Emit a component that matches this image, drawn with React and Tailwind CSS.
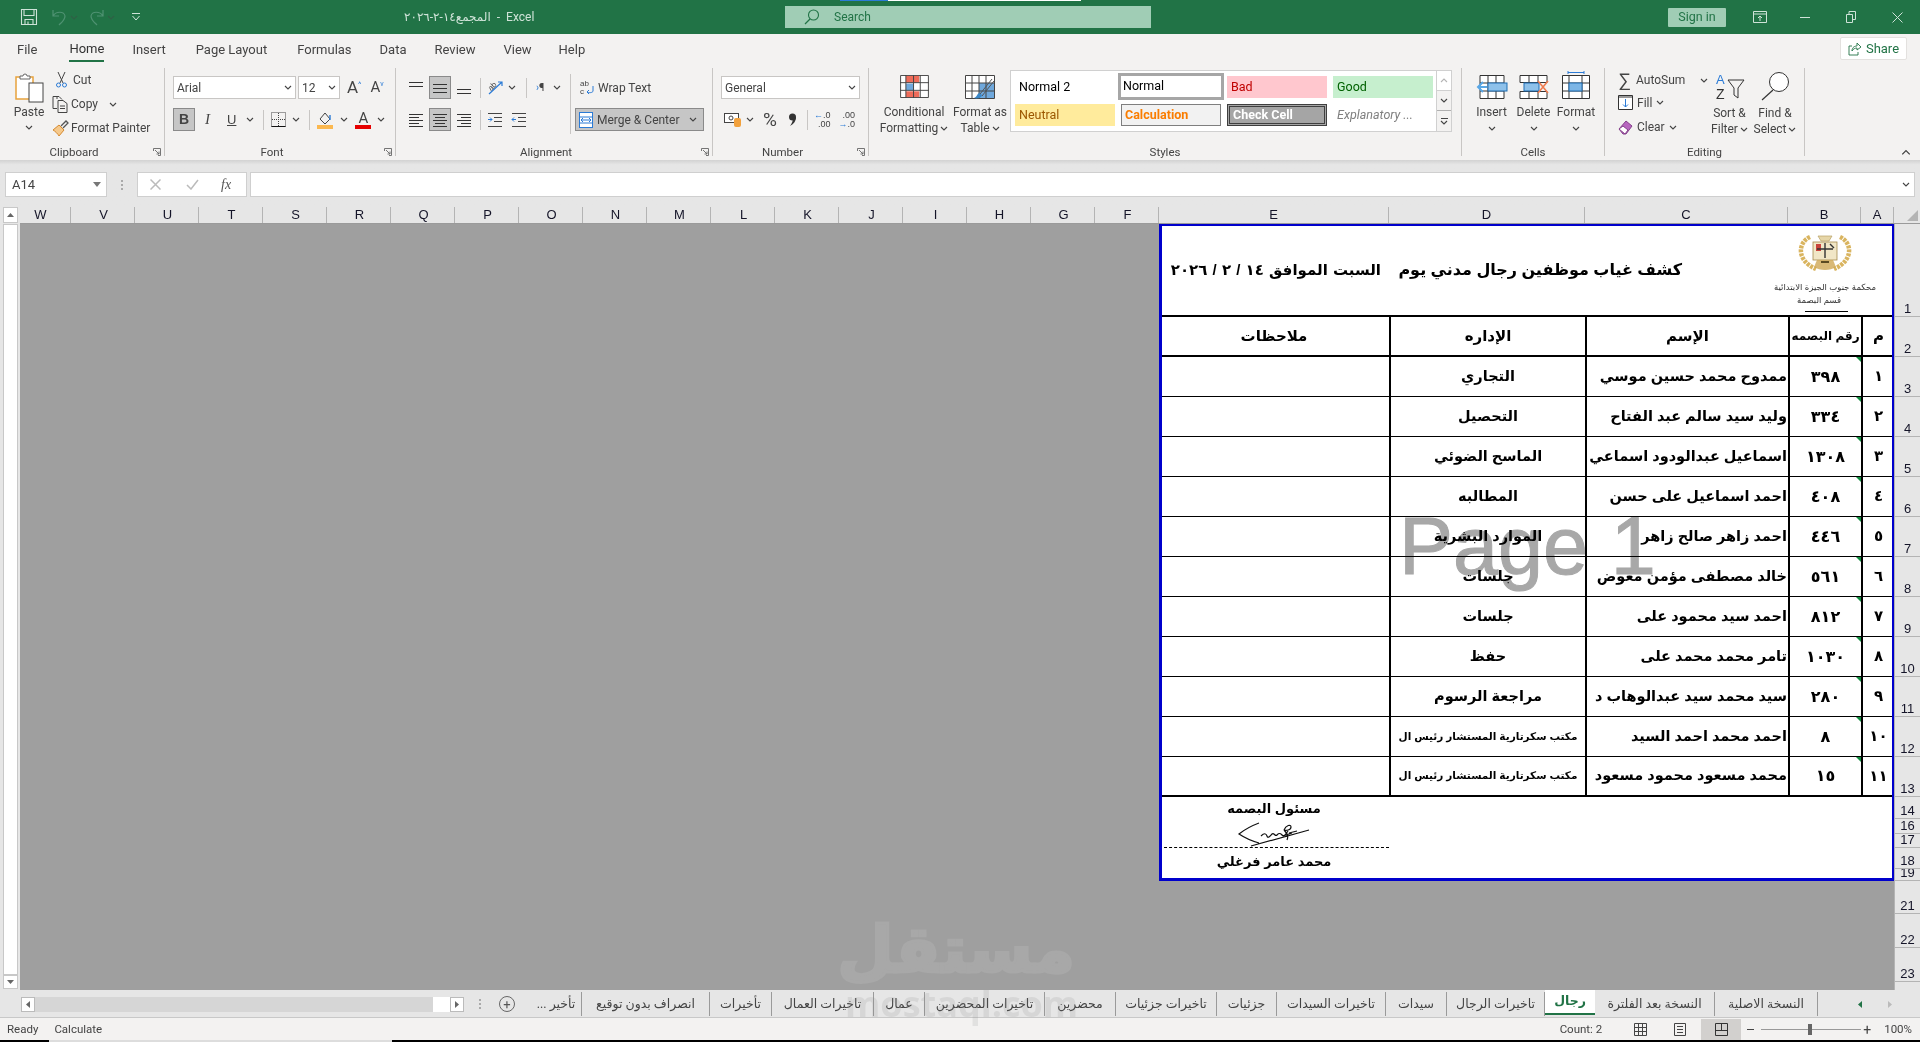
import React from 'react';

const Chev = ({ className = '', up = false }) => (
  <svg width="8" height="5" viewBox="0 0 8 5" className={`shrink-0 ${className}`}>
    <path d={up ? 'M1 4l3-3 3 3' : 'M1 1l3 3 3-3'} fill="none" stroke="#444" strokeWidth="1.1" />
  </svg>
);

const Lines = ({ rows, w = 16, h = 14, color = '#333', stroke = 1 }) => (
  <svg width={w} height={h} viewBox={`0 0 ${w} ${h}`} className="shrink-0">
    {rows.map((r, i) => (
      <line key={i} x1={r[0]} x2={r[1]} y1={r[2] + 0.5} y2={r[2] + 0.5} stroke={r[3] || color} strokeWidth={stroke} />
    ))}
  </svg>
);

const Launcher = () => (
  <svg width="8" height="8" viewBox="0 0 8 8" className="absolute right-[3px] top-[4px]">
    <path d="M.5 3V.5H7.5V7.5H5M2 2l4 4M6 3.5V6H3.5" fill="none" stroke="#666" strokeWidth="0.9" />
  </svg>
);

const Group = ({ w, label, launcher, children }) => (
  <div className={`${w} h-[88px] shrink-0 border-r border-[#c8c6c4] flex flex-col`}>
    <div className="h-[76px] flex">{children}</div>
    <div className={`relative h-[12px] leading-[16px] text-center text-[11.5px] text-[#444] ${launcher ? 'pr-[16px]' : ''}`}>
      {label}
      {launcher && <Launcher />}
    </div>
  </div>
);

const Btn = ({ active, className = '', children }) => (
  <div className={`h-[23px] flex items-center justify-center shrink-0 ${active ? 'bg-[#c6c6c6] border border-[#8a8a8a]' : ''} ${className}`}>
    {children}
  </div>
);

const VSep = ({ className = '' }) => <div className={`w-px h-[20px] bg-[#c8c6c4] shrink-0 ${className}`} />;

const GridIcon = ({ children, w = 30, h = 24 }) => (
  <svg width={w} height={h} viewBox="0 0 30 24" className="shrink-0">
    {children}
  </svg>
);

const cols = ['W', 'V', 'U', 'T', 'S', 'R', 'Q', 'P', 'O', 'N', 'M', 'L', 'K', 'J', 'I', 'H', 'G', 'F'];
const rowHeads = [
  ['1', 'h-[93px]'], ['2', 'h-[40px]'], ['3', 'h-[40px]'], ['4', 'h-[40px]'], ['5', 'h-[40px]'], ['6', 'h-[40px]'],
  ['7', 'h-[40px]'], ['8', 'h-[40px]'], ['9', 'h-[40px]'], ['10', 'h-[40px]'], ['11', 'h-[40px]'], ['12', 'h-[40px]'],
  ['13', 'h-[40px]'], ['14', 'h-[22px]'], ['16', 'h-[15px]'], ['17', 'h-[14px]'], ['18', 'h-[21px]'], ['19', 'h-[12px]'],
  ['21', 'h-[33px]'], ['22', 'h-[34px]'], ['23', 'h-[34px]'], ['', 'h-[9px]'],
];

const LONG = 'مكتب سكرتارية المستشار رئيس ال';
const people = [
  ['١', '٣٩٨', 'ممدوح محمد حسين موسي', 'التجاري'],
  ['٢', '٣٣٤', 'وليد سيد سالم عبد الفتاح', 'التحصيل'],
  ['٣', '١٣٠٨', 'اسماعيل عبدالودود اسماعي', 'الماسح الضوئي'],
  ['٤', '٤٠٨', 'احمد اسماعيل على حسن', 'المطالبه'],
  ['٥', '٤٤٦', 'احمد زاهر صالح زاهر', 'الموارد البشرية'],
  ['٦', '٥٦١', 'خالد مصطفى مؤمن معوض', 'جلسات'],
  ['٧', '٨١٢', 'احمد سيد محمود على', 'جلسات'],
  ['٨', '١٠٣٠', 'تامر محمد محمد على', 'حفظ'],
  ['٩', '٢٨٠', 'سيد محمد سيد عبدالوهاب د', 'مراجعة الرسوم'],
  ['١٠', '٨', 'احمد محمد احمد السيد', LONG],
  ['١١', '١٥', 'محمد مسعود محمود مسعود', LONG],
];

const tabs = [
  ['تأخير ...', 'w-[51px]'], ['انصراف بدون توقيع', 'w-[128px]'], ['تأخيرات', 'w-[62px]'], ['تاخيرات العمال', 'w-[102px]'],
  ['عمال', 'w-[51px]'], ['تاخيرات المحضرين', 'w-[120px]'], ['محضرين', 'w-[71px]'], ['تاخيرات جزئيات', 'w-[101px]'],
  ['جزئيات', 'w-[60px]'], ['تاخيرات السيدات', 'w-[109px]'], ['سيدات', 'w-[61px]'], ['تاخيرات الرجال', 'w-[98px]'],
];

const Logo = () => (
  <svg width="58" height="42" viewBox="0 0 58 42">
    <path d="M14 6C1 12 1 30 20 38M44 6C57 12 57 30 38 38" fill="none" stroke="#d9b45f" strokeWidth="4.5" strokeDasharray="3 1" />
    <path d="M22 5h14l-3 5h-8z" fill="#e6d6a8" stroke="#b8a065" strokeWidth="0.7" />
    <rect x="17" y="11" width="24" height="18" fill="#f1e6c6" stroke="#a5894c" strokeWidth="0.8" />
    <rect x="20" y="13" width="5" height="7" fill="#c8433c" />
    <path d="M29 12v15M21 18h16M34 13l4 4" stroke="#333" strokeWidth="1.4" fill="none" />
    <path d="M18 36c6 4 16 4 22 0l-3-7H21z" fill="#cfa855" opacity="0.8" />
    <path d="M25 31h8" stroke="#5b4a22" strokeWidth="2" />
  </svg>
);

const Signature = () => (
  <svg width="74" height="28" viewBox="0 0 74 28">
    <path
      d="M22 4C14 7 7 11 2 15c6 4 13 7 20 9M24 17c3-3 5-3 6 0s3 0 5-2 3 3 5 1 3-2 5 0 4-1 6-4M47 11c2-5 7-6 7-3s-5 4-7 3c3 3 5 6 3 10M55 14l-9 3M14 27l58-16M60 12l-8 2"
      fill="none" stroke="#111" strokeWidth="1.2"
    />
  </svg>
);

const App = () => (
  <div className="w-[1920px] h-[1042px] overflow-hidden flex flex-col font-['Roboto','DejaVu_Sans',sans-serif] text-[12px] text-[#444] bg-[#e6e6e6] relative">
    {/* title bar */}
    <div className="h-[34px] bg-[#217346] flex items-center shrink-0 relative text-[#cfe3d8]">
      <div className="absolute left-[840px] top-0 w-[241px] h-px bg-white">
        <div className="w-[48px] h-px bg-[#2b7bd6]" />
      </div>
      <svg width="18" height="18" viewBox="0 0 18 18" className="ml-[20px] shrink-0">
        <path d="M1.5 1.5h15v15h-15zM4 1.5v6h10v-6M5 16.5v-5h8v5M8 16.5v-3" fill="none" stroke="#cfe3d8" strokeWidth="1.1" />
      </svg>
      <svg width="16" height="18" viewBox="0 0 16 18" className="ml-[13px] shrink-0">
        <path d="M2 2v6h6M2 8c3-5 11-5 12 0 0 4-3 6-6 9" fill="none" stroke="#4f9272" strokeWidth="1.2" />
      </svg>
      <Chev className="ml-[3px] opacity-40" />
      <svg width="16" height="18" viewBox="0 0 16 18" className="ml-[11px] shrink-0">
        <path d="M14 2v6H8M14 8C11 3 3 3 2 8c0 4 3 6 6 9" fill="none" stroke="#4f9272" strokeWidth="1.2" />
      </svg>
      <Chev className="ml-[2px] opacity-40" />
      <svg width="8" height="8" viewBox="0 0 8 8" className="ml-[17px] shrink-0">
        <path d="M0 .5h8M.5 3l3.5 4 3.5-4" fill="none" stroke="#cfe3d8" strokeWidth="1" />
      </svg>
      <div className="w-[230px] ml-[264px] shrink-0 flex gap-[6px] text-[12px] whitespace-nowrap">
        <span>المجمع١٤-٢-٢٠٢٦</span><span>-</span><span>Excel</span>
      </div>
      <div className="absolute left-[785px] top-[6px] w-[366px] h-[22px] bg-[#a0cdb5] flex items-center text-[#217346]">
        <svg width="16" height="16" viewBox="0 0 16 16" className="ml-[19px]">
          <circle cx="9.5" cy="6" r="5" fill="none" stroke="#217346" strokeWidth="1.1" />
          <path d="M6 10l-5 5" stroke="#217346" strokeWidth="1.2" />
        </svg>
        <span className="ml-[14px]">Search</span>
      </div>
      <div className="ml-auto w-[58px] h-[19px] bg-[#a0cdb5] text-[#217346] rounded-[1px] flex items-center justify-center text-[12.5px]">Sign in</div>
      <svg width="14" height="12" viewBox="0 0 14 12" className="ml-[27px]">
        <path d="M.5.5h13v11H.5zM.5 3h13M7 10V5M5 7l2-2 2 2" fill="none" stroke="#cfe3d8" />
      </svg>
      <div className="w-[10px] h-px bg-[#cfe3d8] ml-[33px]" />
      <svg width="10" height="12" viewBox="0 0 10 12" className="ml-[36px]">
        <path d="M.5 3.5h6v8h-6zM3 3.5V.5h6.5v8H6.5" fill="none" stroke="#cfe3d8" />
      </svg>
      <svg width="11" height="11" viewBox="0 0 11 11" className="ml-[36px] mr-[17px]">
        <path d="M.5.5l10 10M10.5.5l-10 10" stroke="#cfe3d8" />
      </svg>
    </div>

    {/* ribbon */}
    <div className="h-[126px] bg-[#f3f2f1] shrink-0 flex flex-col">
      <div className="h-[34px] flex items-start text-[13px] relative">
        {[
          ['File', 'ml-[17px]', false], ['Home', 'ml-[32px]', true], ['Insert', 'ml-[28px]', false], ['Page Layout', 'ml-[30px]', false],
          ['Formulas', 'ml-[30px]', false], ['Data', 'ml-[28px]', false], ['Review', 'ml-[28px]', false], ['View', 'ml-[28px]', false], ['Help', 'ml-[27px]', false],
        ].map(([t, m, on]) => (
          <div key={t} className={`${m} h-[28px] flex items-center pt-[4px] ${on ? 'border-b-[2px] border-[#217346] text-[#333]' : ''}`}>{t}</div>
        ))}
        <div className="ml-auto mr-[13px] mt-[3px] w-[67px] h-[23px] bg-white border border-[#e3e1df] rounded-[2px] flex items-center justify-center gap-[5px] text-[#217346] text-[13px]">
          <svg width="13" height="14" viewBox="0 0 13 14">
            <path d="M4 4H1v9h9v-3M4 9c0-4 3-5 5-5V1l4 4-4 3V6c-2 0-4 1-5 3z" fill="none" stroke="#217346" strokeWidth="0.9" />
          </svg>
          Share
        </div>
      </div>

      <div className="h-[88px] flex">
        <Group w="w-[165px]" label="Clipboard" launcher>
          <div className="w-[40px] ml-[9px] flex flex-col items-center pt-[5px]">
            <svg width="29" height="30" viewBox="0 0 29 30">
              <path d="M1 4h17v22H1z" fill="#fff" stroke="#e8a33d" strokeWidth="1.5" />
              <path d="M5 5V3h3a2 2 0 014 0h3v3H5z" fill="#fff" stroke="#666" />
              <rect x="14" y="10" width="14" height="19" fill="#fff" stroke="#444" />
            </svg>
            <span className="mt-[2px] leading-[14px]">Paste</span>
            <Chev className="mt-[6px]" />
          </div>
          <div className="ml-[3px] flex flex-col">
            <div className="h-[24px] flex items-center gap-[5px] pl-[3px]">
              <svg width="13" height="16" viewBox="0 0 13 16">
                <path d="M3 0l5 11M10 0L5 11" stroke="#444" fill="none" />
                <circle cx="3.5" cy="13" r="2" fill="none" stroke="#2b7bd6" />
                <circle cx="9.5" cy="13" r="2" fill="none" stroke="#2b7bd6" />
              </svg>
              Cut
            </div>
            <div className="h-[24px] flex items-center gap-[2px]">
              <svg width="17" height="17" viewBox="0 0 17 17">
                <path d="M5 3V.5h0M1 .5h6l3 3M1 .5v12h4M6 4.5h5l4 3v9H6zM8 10h5M8 12.5h5" fill="none" stroke="#444" />
              </svg>
              Copy
              <Chev className="ml-[9px]" />
            </div>
            <div className="h-[24px] flex items-center gap-[2px]">
              <svg width="17" height="17" viewBox="0 0 17 17">
                <path d="M1 10l6-5 5 5-5 6c-1-2-4-5-6-6z" fill="#f5c98c" stroke="#d68a2f" />
                <path d="M9 6l5-5 2 2-5 5" fill="none" stroke="#555" strokeWidth="1.3" />
              </svg>
              Format Painter
            </div>
          </div>
        </Group>

        <Group w="w-[231px]" label="Font" launcher>
          <div className="pl-[8px] pt-[8px] flex flex-col">
            <div className="flex items-center h-[23px]">
              <div className="w-[123px] h-[23px] bg-white border border-[#c8c6c4] flex items-center justify-between px-[3px]">Arial<Chev /></div>
              <div className="w-[42px] h-[23px] ml-[2px] bg-white border border-[#c8c6c4] flex items-center justify-between px-[3px]">12<Chev /></div>
              <span className="ml-[7px] text-[17px] leading-none">A</span><span className="text-[8px] self-start mt-[3px] text-[#2b7bd6]">^</span>
              <span className="ml-[9px] text-[15px] leading-none">A</span><span className="text-[7px] self-start mt-[3px] text-[#2b7bd6]">v</span>
            </div>
            <div className="flex items-center h-[23px] mt-[9px]">
              <Btn active className="w-[22px] font-['Liberation_Sans',sans-serif] font-bold text-[14px]">B</Btn>
              <span className="ml-[10px] w-[10px] italic font-['Liberation_Serif',serif] text-[15px]">I</span>
              <span className="ml-[12px] underline font-['Liberation_Sans',sans-serif] text-[13px]">U</span>
              <Chev className="ml-[10px]" />
              <VSep className="ml-[9px]" />
              <svg width="15" height="15" viewBox="0 0 15 15" className="ml-[7px]">
                <path d="M.5.5h14v14H.5z" fill="none" stroke="#444" strokeDasharray="1 1" />
                <path d="M.5 14.5h14" stroke="#111" />
                <path d="M7.5 1v13M1 7.5h13" stroke="#444" strokeDasharray="1 1" />
              </svg>
              <Chev className="ml-[6px]" />
              <VSep className="ml-[9px]" />
              <svg width="17" height="18" viewBox="0 0 17 18" className="ml-[7px]">
                <path d="M3 8l5-6 5 6-5 5z" fill="none" stroke="#444" />
                <path d="M13 4v5" stroke="#2b7bd6" strokeWidth="1.4" />
                <rect x="0" y="14" width="16" height="4" fill="#fbb84f" />
              </svg>
              <Chev className="ml-[6px]" />
              <div className="ml-[7px] w-[16px] flex flex-col items-center">
                <span className="text-[15px] leading-[14px]">A</span>
                <div className="w-[16px] h-[4px] bg-[#e60000]" />
              </div>
              <Chev className="ml-[6px]" />
            </div>
          </div>
        </Group>

        <Group w="w-[317px]" label="Alignment" launcher>
          <div className="pl-[9px] pt-[8px] flex flex-col w-[174px]">
            <div className="flex items-center h-[23px]">
              <Btn className="w-[22px]"><Lines rows={[[1, 15, 1], [1, 15, 5]]} /></Btn>
              <Btn active className="w-[22px] ml-[2px]"><Lines rows={[[1, 15, 3], [1, 15, 7], [1, 15, 11]]} /></Btn>
              <Btn className="w-[22px] ml-[2px]"><Lines rows={[[1, 15, 8], [1, 15, 12]]} /></Btn>
              <VSep className="ml-[5px]" />
              <svg width="17" height="17" viewBox="0 0 17 17" className="ml-[6px]">
                <text x="0" y="9" fontSize="8" transform="rotate(-45 6 6)" fill="#444" fontFamily="Liberation Sans">ab</text>
                <path d="M2 15L15 3M11 3h4v4" fill="none" stroke="#2b7bd6" strokeWidth="1.2" />
              </svg>
              <Chev className="ml-[4px]" />
              <VSep className="ml-[10px]" />
              <span className="ml-[9px] text-[#2b7bd6] text-[10px] leading-none">›</span>
              <span className="text-[11px] leading-none">¶</span>
              <Chev className="ml-[9px]" />
            </div>
            <div className="flex items-center h-[23px] mt-[9px]">
              <Btn className="w-[22px]"><Lines rows={[[1, 15, 1], [1, 11, 4], [1, 15, 7], [1, 11, 10], [1, 15, 13]]} /></Btn>
              <Btn active className="w-[22px] ml-[2px]"><Lines rows={[[1, 15, 1], [3, 13, 4], [1, 15, 7], [3, 13, 10], [1, 15, 13]]} /></Btn>
              <Btn className="w-[22px] ml-[2px]"><Lines rows={[[1, 15, 1], [5, 15, 4], [1, 15, 7], [5, 15, 10], [1, 15, 13]]} /></Btn>
              <VSep className="ml-[5px]" />
              <svg width="16" height="14" viewBox="0 0 16 14" className="ml-[6px]">
                <path d="M1 .5h14M7 4.5h8M7 8.5h8M1 13.5h14" stroke="#444" />
                <path d="M1 6.5h4M3 4.5l2 2-2 2" stroke="#2b7bd6" fill="none" />
              </svg>
              <svg width="16" height="14" viewBox="0 0 16 14" className="ml-[8px]">
                <path d="M1 .5h14M7 4.5h8M7 8.5h8M1 13.5h14" stroke="#444" />
                <path d="M1 6.5h4M3 4.5l-2 2 2 2" stroke="#2b7bd6" fill="none" />
              </svg>
            </div>
          </div>
          <div className="w-px h-[60px] bg-[#c8c6c4] mt-[6px]" />
          <div className="ml-[4px] pt-[8px] flex flex-col">
            <div className="h-[23px] flex items-center gap-[3px] ml-[5px]">
              <svg width="15" height="17" viewBox="0 0 15 17">
                <text x="0" y="7" fontSize="8" fill="#444" fontFamily="Liberation Sans">ab</text>
                <text x="0" y="15" fontSize="8" fill="#444" fontFamily="Liberation Sans">c</text>
                <path d="M13 7v5c0 2-5 2-6 1M9 11l-2 2 2 2" fill="none" stroke="#2b7bd6" />
              </svg>
              Wrap Text
            </div>
            <div className="mt-[9px] w-[129px] h-[23px] bg-[#c6c6c6] border border-[#8a8a8a] flex items-center px-[3px] gap-[4px]">
              <svg width="14" height="16" viewBox="0 0 14 16">
                <rect x="0.5" y="0.5" width="13" height="15" fill="#fff" stroke="#2b7bd6" />
                <path d="M.5 5h13M.5 11h13" stroke="#2b7bd6" />
                <path d="M2 8h10M4 6l-2 2 2 2M10 6l2 2-2 2" fill="none" stroke="#2b7bd6" />
              </svg>
              Merge &amp; Center
              <Chev className="ml-auto mr-[3px]" />
            </div>
          </div>
        </Group>

        <Group w="w-[156px]" label="Number" launcher>
          <div className="pl-[8px] pt-[8px] flex flex-col">
            <div className="w-[139px] h-[23px] bg-white border border-[#c8c6c4] flex items-center justify-between px-[3px]">General<Chev /></div>
            <div className="flex items-center h-[23px] mt-[9px]">
              <svg width="17" height="15" viewBox="0 0 17 15" className="ml-[3px]">
                <rect x="0.5" y="1.5" width="14" height="9" fill="#fff" stroke="#444" />
                <circle cx="7" cy="6" r="2" fill="none" stroke="#444" />
                <rect x="10" y="6" width="7" height="9" rx="2" fill="#f2a13c" />
              </svg>
              <Chev className="ml-[5px]" />
              <span className="ml-[9px] text-[19px] leading-none">%</span>
              <svg width="9" height="14" viewBox="0 0 9 14" className="ml-[11px] shrink-0">
                <circle cx="4.500" cy="4" r="3.500" fill="#333" />
                <path d="M8 4c0 4-2 7-6 9 2-3 3-5 3-8z" fill="#333" />
              </svg>
              <VSep className="ml-[10px]" />
              <div className="ml-[6px] flex flex-col text-[9px] leading-[9px] font-['Liberation_Sans',sans-serif] text-right">
                <span><span className="text-[#2b7bd6]">←</span>.0</span><span>.00</span>
              </div>
              <div className="ml-[8px] flex flex-col text-[9px] leading-[9px] font-['Liberation_Sans',sans-serif] text-right">
                <span>.00</span><span><span className="text-[#2b7bd6]">→</span>.0</span>
              </div>
            </div>
          </div>
        </Group>

        <Group w="w-[593px]" label="Styles">
          <div className="w-[80px] ml-[5px] flex flex-col items-center pt-[7px]">
            <GridIcon w={29} h={23}>
              <path d="M.5.5h29v23H.5z" fill="#fff" stroke="#444" />
              <rect x="6" y="1" width="14" height="7" fill="#ef6c5a" />
              <rect x="6" y="9" width="8" height="7" fill="#6fa8dc" />
              <rect x="6" y="17" width="14" height="6" fill="#ef6c5a" />
              <path d="M6 0v24M14 0v24M21 0v24M0 8h30M0 16h30" stroke="#444" />
            </GridIcon>
            <span className="mt-[6px] leading-[16px]">Conditional</span>
            <span className="leading-[16px] flex items-center gap-[2px]">Formatting<Chev /></span>
          </div>
          <div className="w-[52px] flex flex-col items-center pt-[7px] whitespace-nowrap">
            <GridIcon w={30} h={24}>
              <path d="M.5.5h29v23H.5z" fill="#fff" stroke="#444" />
              <rect x="14" y="8" width="15" height="15" fill="#6fa8dc" />
              <path d="M7 0v24M14 0v24M21 0v24M0 8h30M0 16h30" stroke="#444" />
              <path d="M27 4L15 19M29 6L17 21" stroke="#555" fill="#fff" />
              <path d="M14 18c-2 1-2 4-5 5 3 1 8 0 8-3z" fill="#3a87c8" />
            </GridIcon>
            <span className="mt-[5px] leading-[16px]">Format as</span>
            <span className="leading-[16px] flex items-center gap-[2px]">Table<Chev /></span>
          </div>
          <div className="ml-[4px] mt-[2px] w-[442px] h-[62px] bg-white border border-[#d0d0d0] flex">
            <div className="pl-[4px] pt-[5px] grid grid-cols-[100px_100px_100px_100px] grid-rows-[22px_22px] gap-x-[6px] gap-y-[6px] text-[12.5px] w-[426px]">
              <div className="flex items-center pl-[4px] text-black">Normal 2</div>
              <div className="flex items-center pl-[2px] -ml-[3px] -mt-[3px] w-[106px] h-[27px] border-[3px] border-[#a6a6a6] bg-white text-black">Normal</div>
              <div className="flex items-center pl-[4px] bg-[#ffc7ce] text-[#c00000]">Bad</div>
              <div className="flex items-center pl-[4px] bg-[#c6efce] text-[#006100]">Good</div>
              <div className="flex items-center pl-[4px] bg-[#ffeb9c] text-[#9c5700]">Neutral</div>
              <div className="flex items-center pl-[3px] bg-[#f2f2f2] border border-[#7f7f7f] text-[#fa7d00] font-bold">Calculation</div>
              <div className="flex items-center pl-[3px] bg-[#a5a5a5] border-[3px] border-double border-[#3f3f3f] text-white font-bold">Check Cell</div>
              <div className="flex items-center pl-[4px] italic text-[#7f7f7f]">Explanatory ...</div>
            </div>
            <div className="w-[15px] flex flex-col border-l border-[#d0d0d0]">
              <div className="h-[20px] flex items-center justify-center border-b border-[#d0d0d0]"><Chev up className="opacity-40" /></div>
              <div className="h-[20px] flex items-center justify-center border-b border-[#b0b0b0] bg-[#f3f2f1]"><Chev /></div>
              <div className="flex-1 flex flex-col items-center justify-center bg-[#f3f2f1]">
                <div className="w-[7px] h-px bg-[#444] mb-[1px]" />
                <Chev />
              </div>
            </div>
          </div>
        </Group>

        <Group w="w-[143px]" label="Cells">
          <div className="w-[41px] ml-[9px] flex flex-col items-center pt-[7px]">
            <GridIcon w={32} h={24}>
              <path d="M3 .5h24v23H3zM0 0" fill="#fff" stroke="#333" />
              <path d="M11 1v22M19 1v22M3 8h24M3 16h24" stroke="#333" />
              <rect x="11" y="8" width="19" height="8" fill="#8ec1ea" stroke="#1f6fb5" />
              <path d="M10 12H2M6 7l-5 5 5 5" fill="none" stroke="#59a7e6" strokeWidth="2" />
            </GridIcon>
            <span className="mt-[5px] leading-[16px]">Insert</span>
            <Chev className="mt-[6px]" />
          </div>
          <div className="w-[43px] flex flex-col items-center pt-[7px]">
            <GridIcon w={32} h={24}>
              <path d="M1 .5h27v7H1zM1 16.5h27v7H1z" fill="#fff" stroke="#333" />
              <path d="M10 1v7M19 1v7M10 16v7M19 16v7" stroke="#333" />
              <rect x="5" y="8" width="15" height="8" fill="#8ec1ea" stroke="#1f6fb5" />
              <path d="M19 6l10 12M29 6L19 18" stroke="#f07c4f" strokeWidth="1.6" />
            </GridIcon>
            <span className="mt-[5px] leading-[16px]">Delete</span>
            <Chev className="mt-[6px]" />
          </div>
          <div className="w-[42px] flex flex-col items-center pt-[3px]">
            <svg width="28" height="28" viewBox="0 0 28 28">
              <path d="M6 1.5h16M6 0v3M22 0v3" stroke="#2b7bd6" />
              <path d="M.5 4.5h27v23H.5z" fill="#fff" stroke="#333" />
              <path d="M7 5v22M20 5v22M1 12h26M1 20h26" stroke="#333" />
              <rect x="7" y="12" width="13" height="8" fill="#7db6e6" stroke="#1f6fb5" />
            </svg>
            <span className="mt-[5px] leading-[16px]">Format</span>
            <Chev className="mt-[6px]" />
          </div>
        </Group>

        <Group w="w-[200px]" label="Editing">
          <div className="w-[100px] ml-[13px] flex flex-col pt-[1px]">
            <div className="h-[22px] flex items-center gap-[4px]">
              <span className="text-[18px] leading-none w-[14px] font-['Liberation_Sans',sans-serif]">∑</span>AutoSum
              <Chev className="ml-[11px]" />
            </div>
            <div className="h-[23px] flex items-center gap-[4px]">
              <svg width="15" height="15" viewBox="0 0 15 15">
                <path d="M.5.5h14v14H.5z" fill="#fff" stroke="#333" />
                <path d="M.5 2h14" stroke="#333" />
                <path d="M7.5 4v8M5 9.5l2.500 2.500L10 9.500" fill="none" stroke="#2b7bd6" />
              </svg>
              Fill<Chev />
            </div>
            <div className="h-[24px] flex items-center gap-[4px] mt-[1px]">
              <svg width="15" height="15" viewBox="0 0 15 15">
                <path d="M1 9l7-8 6 5-6 8H5z" fill="#b766bf" stroke="#85408b" />
                <path d="M1 9l6 5 3-4-5-4z" fill="#fff" stroke="#85408b" />
              </svg>
              Clear<Chev />
            </div>
          </div>
          <div className="w-[45px] -ml-[11px] flex flex-col items-center pt-[3px]">
            <svg width="30" height="30" viewBox="0 0 30 30">
              <text x="1" y="13" fontSize="13" fill="#2b7bd6" fontFamily="Liberation Sans">A</text>
              <text x="1" y="28" fontSize="14" fill="#333" fontFamily="Liberation Sans">Z</text>
              <path d="M13 9h16l-6 8v10l-4-3v-7z" fill="none" stroke="#333" />
            </svg>
            <span className="mt-[4px] leading-[16px]">Sort &amp;</span>
            <span className="leading-[16px] flex items-center gap-[2px] whitespace-nowrap">Filter<Chev /></span>
          </div>
          <div className="w-[46px] flex flex-col items-center pt-[3px]">
            <svg width="30" height="30" viewBox="0 0 30 30">
              <circle cx="19" cy="11" r="9.500" fill="#fff" stroke="#333" />
              <path d="M13 19L2 29" stroke="#333" strokeWidth="1.2" />
            </svg>
            <span className="mt-[4px] leading-[16px]">Find &amp;</span>
            <span className="leading-[16px] flex items-center gap-[2px] whitespace-nowrap">Select<Chev /></span>
          </div>
        </Group>
        <div className="flex-1 flex items-end justify-end pr-[10px] pb-[1px]"><Chev up className="scale-125" /></div>
      </div>
    </div>

    {/* formula bar */}
    <div className="h-[47px] shrink-0 bg-[#e6e6e6] bg-gradient-to-b from-[#d2d2d2] via-[#e6e6e6] via-10% to-[#e6e6e6] pt-[12px] flex items-start">
      <div className="ml-[5px] w-[102px] h-[25px] bg-white border border-[#cfcfcf] flex items-center justify-between pl-[6px] pr-[5px] text-[13px]">
        A14
        <svg width="8" height="5" viewBox="0 0 8 5"><path d="M0 0h8L4 5z" fill="#777" /></svg>
      </div>
      <div className="w-[30px] flex flex-col items-center justify-center gap-[2px] h-[25px]">
        <div className="w-[2px] h-[2px] bg-[#aaa]" /><div className="w-[2px] h-[2px] bg-[#aaa]" /><div className="w-[2px] h-[2px] bg-[#aaa]" />
      </div>
      <div className="w-[110px] h-[25px] bg-white border border-[#cfcfcf] flex items-center">
        <svg width="11" height="11" viewBox="0 0 11 11" className="ml-[12px]"><path d="M.5.5l10 10M10.500.5l-10 10" stroke="#bbb" strokeWidth="1.5" /></svg>
        <svg width="13" height="11" viewBox="0 0 13 11" className="ml-[25px]"><path d="M1 6l4 4 7-9" fill="none" stroke="#bbb" strokeWidth="1.5" /></svg>
        <span className="ml-[22px] italic font-['Liberation_Serif',serif] text-[14px] text-[#555]">fx</span>
      </div>
      <div className="ml-[3px] w-[1665px] h-[25px] bg-white border border-[#cfcfcf] flex items-center justify-end pr-[4px]"><Chev /></div>
    </div>

    {/* sheet */}
    <div className="h-[783px] shrink-0 flex relative overflow-hidden">
      <div className="w-[20px] shrink-0 pl-[3px] flex flex-col">
        <div className="w-[15px] h-[16px] bg-white border border-[#c8c8c8] flex items-center justify-center">
          <svg width="7" height="4" viewBox="0 0 7 4"><path d="M0 4h7L3.500 0z" fill="#666" /></svg>
        </div>
        <div className="w-[15px] h-[752px] bg-white border border-[#c8c8c8] mt-[1px]" />
        <div className="flex-1" />
        <div className="w-[15px] h-[14px] bg-white border border-[#c8c8c8] flex items-center justify-center mb-[1px]">
          <svg width="7" height="4" viewBox="0 0 7 4"><path d="M0 0h7L3.500 4z" fill="#666" /></svg>
        </div>
      </div>
      <div className="flex-1 flex flex-col">
        {/* column headers */}
        <div className="h-[16px] flex shrink-0 text-[13px] text-[#141428] font-['Liberation_Sans',sans-serif] border-b border-[#9a9a9a] box-content">
          {cols.map((c, i) => (
            <div key={c} className={`${i === 0 ? 'w-[51px] pr-[9px]' : 'w-[64px] pl-[2px]'} shrink-0 border-r border-[#b4b4b4] flex items-center justify-center`}>{c}</div>
          ))}
          <div className="w-[230px] shrink-0 border-r border-[#b4b4b4] flex items-center justify-center">E</div>
          <div className="w-[196px] shrink-0 border-r border-[#b4b4b4] flex items-center justify-center">D</div>
          <div className="w-[203px] shrink-0 border-r border-[#b4b4b4] flex items-center justify-center">C</div>
          <div className="w-[73px] shrink-0 border-r border-[#b4b4b4] flex items-center justify-center">B</div>
          <div className="w-[33px] shrink-0 border-r border-[#b4b4b4] flex items-center justify-center">A</div>
          <div className="flex-1 flex justify-end items-end p-[2px]">
            <svg width="11" height="11" viewBox="0 0 11 11"><path d="M11 0v11H0z" fill="#b4b4b4" /></svg>
          </div>
        </div>
        <div className="flex-1 flex min-h-0">
          <div className="w-[1139px] shrink-0 bg-[#9f9f9f]" />
          {/* print area */}
          <div className="w-[735px] shrink-0 bg-[#9f9f9f]">
            <div className="relative bg-white h-[657px] text-black font-['Liberation_Sans','DejaVu_Sans',sans-serif] font-bold flex flex-col">
              <div className="h-[93px] flex items-center border-b-2 border-black shrink-0">
                <div dir="rtl" className="ml-[10px] w-[212px] text-[15px] whitespace-nowrap pt-[1px] [word-spacing:1px]">السبت الموافق ١٤ / ٢ / ٢٠٢٦</div>
                <div dir="rtl" className="ml-[13px] w-[288px] text-[16px] whitespace-nowrap pt-[1px]">كشف غياب موظفين رجال مدني يوم</div>
                <div className="ml-auto mr-[14px] w-[110px] flex flex-col items-center pt-[3px] font-normal text-[#333]">
                  <Logo />
                  <span dir="rtl" className="text-[8.5px] mt-[8px] whitespace-nowrap leading-[12px]">محكمة جنوب الجيزة الابتدائية</span>
                  <span dir="rtl" className="text-[8.5px] leading-[14px] -ml-[12px]">قسم البصمة</span>
                  <div className="w-[43px] h-px bg-black mt-[4px] ml-[2px]" />
                </div>
              </div>
              <div className="grid grid-cols-[232px_196px_203px_73px_31px] grid-rows-[38px] border-b-2 border-black text-[15px] shrink-0 h-[40px]">
                {['ملاحظات', 'الإداره', 'الإسم', 'رقم البصمه', 'م'].map((h, i) => (
                  <div key={h} dir="rtl" className={`flex items-center justify-center whitespace-nowrap overflow-hidden ${i === 3 ? 'text-[12px]' : ''} ${i < 4 ? 'border-r-2 border-black' : ''}`}>{h}</div>
                ))}
              </div>
              {people.map((p, idx) => (
                <div key={p[0]} className={`grid grid-cols-[232px_196px_203px_73px_31px] h-[40px] shrink-0 text-[15px] ${idx === 10 ? 'border-b-2' : 'border-b'} border-black`}>
                  <div className="border-r-2 border-black" />
                  <div dir="rtl" className={`border-r-2 border-black flex items-center justify-center whitespace-nowrap ${p[3] === LONG ? 'text-[10.5px]' : 'text-[14.5px]'}`}>{p[3]}</div>
                  <div dir="rtl" className="border-r-2 border-black flex items-center pr-[1px] whitespace-nowrap text-[14.5px]">{p[2]}</div>
                  <div className="relative border-r-2 border-black flex items-center justify-center text-[16px] tracking-[4px]">
                    <span dir="rtl">{p[1]}</span>
                    <svg width="5" height="5" viewBox="0 0 5 5" className="absolute top-0 right-0"><path d="M0 0h5v5z" fill="#0f8a3c" /></svg>
                  </div>
                  <div dir="rtl" className="flex items-center justify-center">{p[0]}</div>
                </div>
              ))}
              <div className="w-[230px] flex flex-col items-center text-[13px]">
                <div className="h-[21px] flex items-end" dir="rtl">مسئول البصمه</div>
                <div className="w-full h-[30px] border-b border-dashed border-black flex items-center justify-center"><Signature /></div>
                <div className="h-[28px] flex items-center text-[13px]" dir="rtl">محمد عامر فرغلي</div>
              </div>
              <div className="absolute left-[240px] top-[282px] text-[#a8a8a8] text-[81px] leading-none font-normal font-['Liberation_Sans',sans-serif] mix-blend-multiply whitespace-nowrap [-webkit-text-stroke:1px_#a8a8a8]">Page 1</div>
              <div className="absolute inset-0 border-t-2 border-r-2 border-l-[3px] border-b-[3px] border-[#0000cc] pointer-events-none" />
            </div>
          </div>
          {/* row headers */}
          <div className="flex-1 flex flex-col border-l border-[#b4b4b4] text-[#141428] text-[13px] font-['Liberation_Sans',sans-serif]">
            {rowHeads.map(([n, h], i) => (
              <div key={i} className={`${h} shrink-0 border-b border-[#b4b4b4] flex items-end justify-center leading-[14px] overflow-hidden`}>{n}</div>
            ))}
          </div>
        </div>
      </div>
    </div>

    {/* tab bar */}
    <div className="h-[28px] shrink-0 flex items-start bg-[#e6e6e6] border-b border-[#c8c8c8] text-[12.5px] text-[#444] box-border">
      <div className="ml-[21px] mt-[7px] w-[443px] h-[15px] bg-[#d6d6d6] flex justify-between">
        <div className="w-[14px] h-[15px] bg-white border border-[#bbb] flex items-center justify-center">
          <svg width="4" height="7" viewBox="0 0 4 7"><path d="M4 0v7L0 3.500z" fill="#666" /></svg>
        </div>
        <div className="flex">
          <div className="w-[17px] h-[15px] bg-white" />
          <div className="w-[14px] h-[15px] bg-white border border-[#bbb] flex items-center justify-center">
            <svg width="4" height="7" viewBox="0 0 4 7"><path d="M0 0v7L4 3.500z" fill="#666" /></svg>
          </div>
        </div>
      </div>
      <div className="ml-[15px] mt-[9px] flex flex-col gap-[2px]">
        <div className="w-[2px] h-[2px] bg-[#aaa]" /><div className="w-[2px] h-[2px] bg-[#aaa]" /><div className="w-[2px] h-[2px] bg-[#aaa]" />
      </div>
      <div className="ml-[18px] mt-[6px] w-[16px] h-[16px] rounded-full border border-[#666] flex items-center justify-center text-[13px] leading-none text-[#555]">+</div>
      <div className="w-[16px]" />
      {tabs.map(([t, w], i) => (
        <div key={i} dir="rtl" className={`${w} h-[24px] mt-[2px] shrink-0 flex items-center justify-center whitespace-nowrap border-r border-[#9a9a9a]`}>{t}</div>
      ))}
      <div dir="rtl" className="w-[50px] h-[25px] bg-white border-b-[2px] border-[#217346] text-[#217346] font-bold flex items-center justify-center shrink-0">رجال</div>
      <div dir="rtl" className="w-[120px] h-[24px] mt-[2px] shrink-0 flex items-center justify-center whitespace-nowrap border-r border-[#9a9a9a]">النسخة بعد الفلترة</div>
      <div dir="rtl" className="w-[103px] h-[24px] mt-[2px] shrink-0 flex items-center justify-center whitespace-nowrap border-r border-[#9a9a9a]">النسخة الاصلية</div>
      <svg width="4" height="7" viewBox="0 0 4 7" className="ml-[40px] mt-[11px]"><path d="M4 0v7L0 3.500z" fill="#217346" /></svg>
      <svg width="4" height="7" viewBox="0 0 4 7" className="ml-[26px] mt-[11px]"><path d="M0 0v7L4 3.500z" fill="#bbb" /></svg>
    </div>

    {/* status bar */}
    <div className="h-[22px] shrink-0 bg-[#f3f2f1] flex items-center text-[11.5px] text-[#444] pt-[1px]">
      <span className="ml-[7px]">Ready</span>
      <span className="ml-[16px]">Calculate</span>
      <span className="ml-auto">Count: 2</span>
      <svg width="13" height="13" viewBox="0 0 13 13" className="ml-[32px]"><path d="M.5.5h12v12H.5zM4.500 0v13M8.500 0v13M0 4.500h13M0 8.500h13" fill="none" stroke="#444" /></svg>
      <svg width="12" height="13" viewBox="0 0 12 13" className="ml-[27px]"><path d="M.5.5h11v12H.5zM3 3.500h6M3 6.500h6M3 9.500h6" fill="none" stroke="#444" /></svg>
      <div className="ml-[15px] w-[40px] h-[21px] bg-[#d2d0ce] flex items-center justify-center">
        <svg width="13" height="13" viewBox="0 0 13 13"><path d="M.5.5h12v12H.5zM6.500.5v7M.5 7.500h12" fill="none" stroke="#333" /></svg>
      </div>
      <div className="ml-[6px] w-[7px] h-px bg-[#444]" />
      <div className="ml-[7px] w-[100px] h-px bg-[#999] relative">
        <div className="absolute left-[47px] top-[-5px] w-[4px] h-[11px] bg-[#666]" />
      </div>
      <span className="ml-[2px] text-[14px] leading-none">+</span>
      <span className="ml-[13px] mr-[8px]">100%</span>
    </div>
    <div className="h-[2px] shrink-0 bg-black flex"><div className="ml-[49px] w-[343px] bg-[#ddd]" /></div>

    {/* mostaql watermark */}
    <div dir="rtl" className="absolute left-[845px] top-[905px] w-[230px] text-center text-[65px] leading-[90px] font-bold text-[#a8a8a8] [-webkit-text-stroke:3px_#a8a8a8] pointer-events-none font-['DejaVu_Sans',sans-serif]">مستقل</div>
    <div className="absolute left-[845px] top-[982px] w-[230px] text-center text-[36px] leading-[44px] font-bold text-[#808080]/15 pointer-events-none font-['Open_Sans',sans-serif]">mostaql.com</div>
  </div>
);

export default App;
